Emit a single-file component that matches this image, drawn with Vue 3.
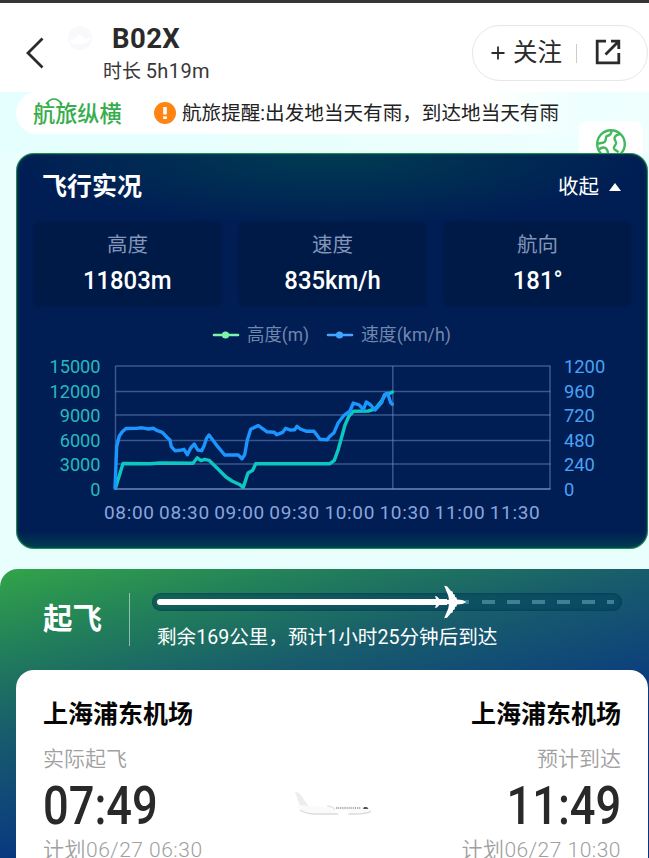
<template>
  <div class="flight-page">
    <header class="top-bar">
      <button class="back" aria-label="返回">
        <svg width="20" height="34" viewBox="0 0 20 34">
          <path d="M17.5 2.5 3 17 17.5 31.5" />
        </svg>
      </button>
      <span class="airline">
        <svg width="26" height="26" viewBox="0 0 26 26">
          <circle cx="13" cy="13" r="12" fill="#f8f8fd" />
          <path d="M2 16q6-1 9-6q6 0 7 5q4-3 6-3q-1 6-11 7Q5 20 2 16z" fill="#fff" />
        </svg>
      </span>
      <div class="flight-name">
        <h1>B02X</h1>
        <p>时长 <span class="duration">5h19m</span></p>
      </div>
      <div class="actions">
        <button class="follow">
          <svg width="14" height="14" viewBox="0 0 14 14">
            <path d="M7 .5v13M.5 7h13" />
          </svg>
          关注
        </button>
        <i class="split"></i>
        <button class="share" aria-label="分享">
          <svg width="28" height="28" viewBox="0 0 28 28">
            <path d="M12 3.2H3.2v21.600h21.600V15M17 3.2h7.8v7.800M24.500 3.500 11.5 16.500" />
          </svg>
        </button>
      </div>
    </header>

    <div class="notice-row">
      <div class="notice">
        <span class="brand">
          航旅纵横
          <svg class="brand-arc" width="18" height="8" viewBox="0 0 18 8">
            <path d="M1 7Q9-3 17 7" />
          </svg>
        </span>
        <svg class="warn" width="22" height="22" viewBox="0 0 22 22">
          <circle cx="11" cy="11" r="11" fill="#ff8412" />
          <path d="M9.2 5h3.6v7.5H9.2zM9.2 14.2h3.6V17H9.2z" fill="#fff" />
        </svg>
        <span class="notice-text">航旅提醒:出发地当天有雨，到达地当天有雨</span>
      </div>
      <div class="globe">
        <svg width="32" height="32" viewBox="0 0 32 32">
          <circle cx="16" cy="16" r="13.800" />
          <path d="M16.500 2.500c0 3.500-1 5-4.500 5.500-2 .5 0 4-2.500 6-2 1.500-4.500.5-6.500 2M4 21.500c3-2.500 6-2.500 7.500-.5s2 5 1 8M25.500 6c-3 .5-6 2-6 4.500 0 2 2 2.500 1.500 5-.5 2-2.500 2.500-2 5 .5 2 3 1.500 4.500 4" />
        </svg>
      </div>
    </div>

    <section class="live-card">
      <div class="live-head">
        <h2>飞行实况</h2>
        <button class="fold">收起 <i class="tri"></i></button>
      </div>
      <div class="stats">
        <div v-for="s in stats" :key="s.label" class="stat">
          <span class="stat-label">{{ s.label }}</span>
          <span class="stat-value">{{ s.value }}</span>
        </div>
      </div>

      <svg class="chart" width="632" height="230" viewBox="16 318 632 230">
        <g class="legend">
          <path d="M214 335h24" stroke="#7df5a6" />
          <circle cx="225.5" cy="335" r="3.6" fill="#7df5a6" />
          <text x="247" y="341" textLength="62" lengthAdjust="spacingAndGlyphs">高度(m)</text>
          <path d="M328 335h24" stroke="#43a5ff" />
          <circle cx="339.5" cy="335" r="3.6" fill="#43a5ff" />
          <text x="361" y="341" textLength="90" lengthAdjust="spacingAndGlyphs">速度(km/h)</text>
        </g>

        <g class="grid">
          <path v-for="y in gridY" :key="y" :d="`M115.5 ${y}H550.5`" />
          <path d="M115.5 366V489M550 366V489M392.8 366V489" />
        </g>
        <path d="M115.5 489H550.5" class="base" />

        <polyline class="line altitude" :points="altitude" />
        <polyline class="line speed" :points="speed" />

        <g v-for="(y, i) in labelY" :key="y" class="axis">
          <text
            :x="100.5 - leftAxis[i].length * 10.2"
            :y="y"
            :textLength="leftAxis[i].length * 10.2"
            lengthAdjust="spacingAndGlyphs"
            fill="#25b9be"
          >{{ leftAxis[i] }}</text>
          <text
            x="564"
            :y="y"
            :textLength="rightAxis[i].length * 10.3"
            lengthAdjust="spacingAndGlyphs"
            fill="#4aa2f5"
          >{{ rightAxis[i] }}</text>
        </g>
        <g class="axis">
          <text
            v-for="(t, i) in times"
            :key="t"
            :x="104 + i * 55.1"
            y="519.3"
            textLength="50"
            fill="#8ba5dc"
          >{{ t }}</text>
        </g>
      </svg>
    </section>

    <section class="status">
      <div class="status-head">
        <h2>起飞</h2>
        <i class="status-split"></i>
        <div class="progress">
          <div class="track">
            <div class="done" :style="{ width: progress + '%' }"></div>
            <svg class="dashes" width="160" height="4" viewBox="0 0 160 4">
              <path d="M0 2h4M17 2h13M42 2h13M67 2h13M92 2h13M117 2h13M142 2h7" />
            </svg>
            <svg class="plane" width="34" height="34" viewBox="0 0 34 34">
              <path d="M32 17c-2-1.800-5-2.500-9-2.500L22.500 12.500l-1.500-.5-.3-2.500-1.600-.6-.5-2.400-1.600-.5L13 1.200 10.200.7 14.200 10.500 15 14.700 6.500 15.300 3 11.500 1 11 2.700 16.200 1 17l1.700.8L1 23l2-.5 3.500-3.800 8.500.6-.8 4.200L10.200 33.300 13 32.800l4-4.800 1.600-.5.5-2.400 1.600-.6.300-2.500 1.500-.5.5-2c4 0 7-.7 9-2.500z" />
            </svg>
          </div>
          <p>剩余169公里，预计1小时25分钟后到达</p>
        </div>
      </div>

      <div class="airport-card">
        <div class="airport">
          <h3>上海浦东机场</h3>
          <span class="tip">实际起飞</span>
          <strong>07:49</strong>
          <span class="plan">计划06/27 06:30</span>
        </div>
        <svg class="jet" width="80" height="28" viewBox="0 0 80 28">
          <path d="M1 1q4 0 6 3l8 11 17 1q22-2 36 0 8 1 9 5-1 3-13 3-36 1-50-2-5-1-7-4L1 16l4-1z" fill="#fafafa" />
          <path d="M1 1q4 0 6 3l7 11-8-1z" fill="#ededed" />
          <path d="M6 19q4 3 13 4h40q15 0 18-3" fill="none" stroke="#dcdcdc" stroke-width="1.3" />
          <path d="M33 15q5 0 9 4l13 1-1 5h-8l-3-3z" fill="#fff" />
          <path d="M33 15q5 0 8 4" fill="none" stroke="#ddd" stroke-width="1.200" />
          <path d="M42 17h25" stroke="#999" stroke-width="1.500" stroke-dasharray="1.2 .9" />
          <path d="M70 16h3l1.500 2H69z" fill="#555" />
        </svg>
        <div class="airport right">
          <h3>上海浦东机场</h3>
          <span class="tip">预计到达</span>
          <strong>11:49</strong>
          <span class="plan">计划06/27 10:30</span>
        </div>
      </div>
    </section>
  </div>
</template>

<script setup>
const stats = [
  { label: "高度", value: "11803m" },
  { label: "速度", value: "835km/h" },
  { label: "航向", value: "181°" },
]

const progress = 63

const gridY = [366, 391.5, 415, 440.5, 464]
const labelY = [373.3, 397.8, 422.3, 446.8, 471.3, 495.8]
const leftAxis = ["15000", "12000", "9000", "6000", "3000", "0"]
const rightAxis = ["1200", "960", "720", "480", "240", "0"]
const times = ["08:00", "08:30", "09:00", "09:30", "10:00", "10:30", "11:00", "11:30"]

const altitude =
  "115.5,488 123,463.5 150,463.7 160,463 193,463.3 197.3,457.8 201,460.6 204.5,459.3 209,460.3 " +
  "217,468 226,477 232,481 240,484.8 243.3,487.3 248,473 252.7,470.3 255.7,463.7 " +
  "330,463.7 334.3,460.3 338.3,449.3 342,436 345,425 349,416 353.3,411.3 368.3,411 375,409 " +
  "381.7,400.7 386,393.8 390,393.3 392.5,392"

const speed =
  "115,488 116.7,446.7 119.3,436 122.5,431.5 126,428.5 136,428.4 142,427.8 148.7,429 153.3,428.3 " +
  "156.7,430.3 162.3,432.3 167.7,438 170,440 171.3,446.7 175,450.7 180,450.3 184,449.3 " +
  "187.3,454.7 190.7,448 194.3,444 197.7,450 201.7,450.7 204,446 206.7,438 209,435 " +
  "216.7,445.3 224.7,455 238.3,455 242,458.7 244.7,454.7 247.3,440 250.7,429.3 258.3,425.5 " +
  "266.7,431.7 274.3,432.3 276.7,434.7 282.7,432.3 285.7,428.3 290,430 294.7,429.7 297,426.3 " +
  "300.3,429 306.7,431.3 314,431.3 320,439.3 327.3,439.7 329.3,436.7 334,432.7 338.3,422.7 " +
  "344,415.3 350,411 353.3,403 359.3,405 363.3,409.7 366.3,402 370.7,405 375,410 381.7,402.7 " +
  "384.3,394.7 387.7,393.7 390.7,402.7 392.3,404.3"
</script>

<style>
body {
  overflow: hidden;
}
</style>

<style scoped>
.flight-page {
  width: 649px;
  height: 858px;
  overflow: hidden;
  box-sizing: border-box;
  border-top: 3px solid #353535;
  background: #e9fffe;
  display: flex;
  flex-direction: column;
  font-family: Roboto, "Noto Sans CJK SC", sans-serif;
  color: #2a2a2a;
}

h1, h2, h3, p {
  margin: 0;
}

button {
  border: none;
  background: transparent;
  padding: 0;
  font: inherit;
  color: inherit;
}

.top-bar {
  height: 89px;
  flex: none;
  background: #fff;
  display: flex;
  align-items: flex-start;
}

.back {
  margin: 33px 0 0 25px;
  width: 20px;
  height: 34px;
}

.back path,
.share path {
  fill: none;
  stroke: #2b2b2b;
  stroke-width: 2.8;
}

.airline {
  margin: 22px 0 0 22px;
  width: 26px;
}

.flight-name {
  margin: 20px 0 0 10px;
  width: 130px;
}

.flight-name h1 {
  padding-left: 9px;
  font-size: 27.5px;
  line-height: 32px;
  font-weight: 700;
  letter-spacing: 0.4px;
}

.flight-name p {
  font-size: 19px;
  line-height: 32px;
  white-space: nowrap;
  color: #383838;
}

.duration {
  font-size: 20px;
  letter-spacing: 0.4px;
}

.actions {
  margin: 22px 1px 0 auto;
  width: 176px;
  height: 56px;
  box-sizing: border-box;
  border: 1px solid #e6e6e6;
  border-radius: 28px;
  display: flex;
  align-items: center;
}

.follow {
  display: flex;
  align-items: center;
  gap: 8px;
  margin-left: 18px;
  font-size: 24.5px;
  line-height: 34px;
  white-space: nowrap;
}

.follow path {
  stroke: #2b2b2b;
  stroke-width: 1.8;
}

.split {
  width: 1px;
  height: 19px;
  margin: 0 17px 0 14px;
  background: #ccc;
}

.share {
  height: 28px;
  margin-top: -3px;
}

.notice-row {
  position: relative;
  height: 61px;
  flex: none;
  background: linear-gradient(90deg, #e4fffe, #eefffe);
}

.notice {
  height: 42px;
  margin: 0 60px 0 16px;
  border-radius: 21px 0 0 21px;
  background: linear-gradient(90deg, #fff 82%, rgba(255, 255, 255, 0));
  display: flex;
  align-items: center;
}

.brand {
  position: relative;
  width: 121px;
  padding: 2px 0 0 17px;
  font-size: 22.2px;
  line-height: 30px;
  font-weight: 500;
  color: #38ad4d;
  white-space: nowrap;
}

.brand-arc {
  position: absolute;
  left: 29px;
  top: 0;
}

.brand-arc path {
  fill: none;
  stroke: #38ad4d;
  stroke-width: 1.6;
}

.warn {
  flex: none;
}

.notice-text {
  margin: 2px 0 0 6px;
  font-size: 19.6px;
  line-height: 30px;
  white-space: nowrap;
  color: #222;
}

.globe {
  position: absolute;
  left: 579px;
  top: 29px;
  width: 64px;
  height: 40px;
  border-radius: 8px;
  background: #fff;
}

.globe svg {
  display: block;
  margin: 7px 0 0 16px;
  fill: none;
  stroke: #42b85c;
  stroke-width: 2.4;
}

.live-card {
  position: relative;
  width: 632px;
  height: 396px;
  flex: none;
  margin-left: 16px;
  box-sizing: border-box;
  border-radius: 18px;
  background:
    linear-gradient(0deg, rgba(0, 110, 75, 0.42), rgba(0, 90, 80, 0) 18px),
    radial-gradient(ellipse 330px 75px at 50% 0, rgba(0, 90, 80, 0.5), rgba(0, 60, 80, 0)),
    #001d54;
  box-shadow: inset 0 0 1px 1px #1f9a4e, inset 0 0 5px rgba(0, 90, 90, 0.6);
  overflow: hidden;
}

.live-head {
  display: flex;
  justify-content: space-between;
  align-items: center;
  height: 66px;
  padding: 2px 27px 0 26px;
  box-sizing: border-box;
  color: #fff;
}

.live-head h2 {
  font-size: 25px;
  line-height: 36px;
  font-weight: 700;
}

.fold {
  display: flex;
  align-items: center;
  gap: 10px;
  font-size: 20.5px;
  line-height: 30px;
}

.tri {
  border: 6px solid transparent;
  border-top: 0;
  border-bottom: 8px solid #fff;
}

.stats {
  display: flex;
  gap: 18px;
  height: 84px;
  padding: 3px 17px 0 18px;
}

.stat {
  flex: 1;
  display: flex;
  flex-direction: column;
  align-items: center;
  border-radius: 6px;
  background: #001a48;
  box-shadow: 0 0 3px #001a48;
}

.stat-label {
  margin-top: 7px;
  font-size: 20.5px;
  line-height: 32px;
  color: #8395b8;
}

.stat-value {
  font-size: 26.5px;
  line-height: 38px;
  font-weight: 500;
  color: #fff;
  transform: scaleX(0.9);
}

.chart {
  display: block;
  margin-top: 12px;
}

.legend {
  font-size: 18px;
  fill: #7187ac;
}

.legend path {
  stroke-width: 2.6;
  stroke-linecap: round;
}

.grid path {
  fill: none;
  stroke: #6d92cc;
  stroke-opacity: 0.5;
  stroke-width: 1.5;
}

.base {
  stroke: #6d89c4;
  stroke-width: 1.5;
}

.line {
  fill: none;
  stroke-width: 3.4;
  stroke-linejoin: round;
  stroke-linecap: round;
}

.altitude {
  stroke: #0cc8c0;
}

.speed {
  stroke: #1b96ff;
}

.axis {
  font-size: 19px;
}

.status {
  flex: 1;
  margin-top: 20px;
  border-radius: 18px 0 0 0;
  background: linear-gradient(166deg, #32a449 0, #217d5b 84px, #185c6c 160px, #0d427b 250px, #083580 290px);
  overflow: hidden;
}

.status-head {
  display: flex;
  height: 101px;
}

.status-head h2 {
  width: 86px;
  padding: 30px 0 0 43px;
  font-size: 29.5px;
  line-height: 40px;
  font-weight: 700;
  color: #fff;
}

.status-split {
  width: 1px;
  height: 53px;
  margin-top: 24px;
  background: rgba(255, 255, 255, 0.5);
}

.progress {
  margin: 24px 0 0 22px;
}

.track {
  position: relative;
  width: 470px;
  height: 18px;
  box-sizing: border-box;
  padding: 6px 5px;
  border-radius: 9px;
  background: rgba(0, 62, 88, 0.5);
  box-shadow: inset 0 0 3px rgba(0, 50, 75, 0.8);
}

.done {
  height: 6px;
  border-radius: 3px 0 0 3px;
  background: #fff;
}

.dashes {
  position: absolute;
  left: 313px;
  top: 7px;
}

.dashes path {
  stroke: #3f8192;
  stroke-width: 4;
}

.plane {
  position: absolute;
  left: 282px;
  top: -8px;
  fill: #fff;
}

.progress p {
  padding-left: 5px;
  margin-top: 12px;
  font-size: 19.6px;
  line-height: 30px;
  color: #fff;
  white-space: nowrap;
}

.airport-card {
  display: flex;
  justify-content: space-between;
  width: 632px;
  height: 230px;
  margin-left: 16px;
  padding: 0 27px;
  box-sizing: border-box;
  border-radius: 18px;
  background: #fff;
}

.airport {
  display: flex;
  flex-direction: column;
  width: 200px;
  white-space: nowrap;
}

.airport h3 {
  margin-top: 26px;
  font-size: 25px;
  line-height: 38px;
  font-weight: 700;
  color: #060606;
}

.tip {
  margin-top: 9px;
  font-size: 21px;
  line-height: 32px;
  font-weight: 350;
  color: #a0a0a0;
}

.airport strong {
  font-size: 54.5px;
  line-height: 60px;
  font-weight: 500;
  color: #292929;
  transform: scaleX(0.83);
  transform-origin: left;
}

.plan {
  font-size: 21px;
  line-height: 31px;
  font-weight: 350;
  letter-spacing: 0.5px;
  color: #a0a0a0;
}

.right {
  align-items: flex-end;
}

.right strong {
  transform-origin: right;
}

.jet {
  margin: 121px 0 0 4px;
}
</style>
